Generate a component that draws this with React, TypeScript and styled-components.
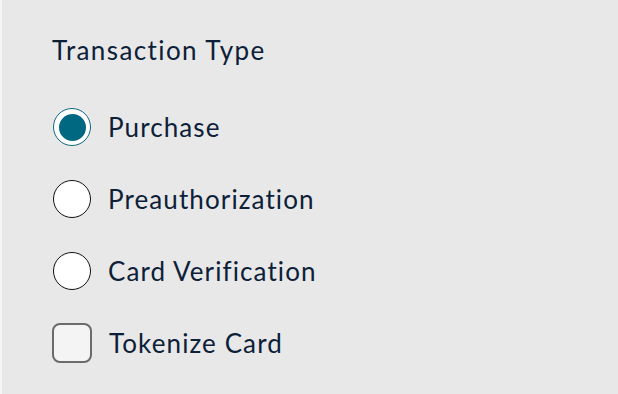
import React, { FC } from 'react'
import styled, { createGlobalStyle, css } from 'styled-components'

type Option = { label: string; kind: 'radio' | 'checkbox'; checked?: boolean }

const options: Option[] = [
  { label: 'Purchase', kind: 'radio', checked: true },
  { label: 'Preauthorization', kind: 'radio' },
  { label: 'Card Verification', kind: 'radio' },
  { label: 'Tokenize Card', kind: 'checkbox' },
]

const App: FC = () => {
  return (
    <>
      <GlobalStyle />
      <Page>
        <Edge />
        <Panel>
          <Heading>Transaction Type</Heading>
          <List>
            {options.map((o) => (
              <Row key={o.label}>
                {o.kind === 'radio' ? <Radio $checked={!!o.checked} /> : <Checkbox />}
                <Label>{o.label}</Label>
              </Row>
            ))}
          </List>
        </Panel>
      </Page>
    </>
  )
}

export default App

const GlobalStyle = createGlobalStyle`
  html, body {
    margin: 0;
    padding: 0;
    background: #e8e8e8;
  }
`

const Page = styled.div`
  display: flex;
  width: 618px;
  height: 394px;
  overflow: hidden;
  font-family: Lato, 'Noto Sans', sans-serif;
  color: #0c2038;
`

const Edge = styled.div`
  width: 2px;
  background: #f6f6f6;
`

const Panel = styled.section`
  flex: 1;
  background: #e8e8e8;
  padding: 34px 0 0 50px;
`

const Heading = styled.h2`
  margin: 0;
  font-size: 26px;
  font-weight: 400;
  line-height: 32px;
  letter-spacing: 1.4px;
`

const List = styled.div`
  display: flex;
  flex-direction: column;
  margin-top: 25px;
`

const Row = styled.label`
  display: flex;
  align-items: center;
  gap: 17px;
  height: 72px;
`

const Radio = styled.span<{ $checked: boolean }>`
  box-sizing: border-box;
  width: 38px;
  height: 38px;
  margin-left: 1px;
  border-radius: 50%;
  background: #fff;
  border: 1.2px solid #111;
  display: flex;
  align-items: center;
  justify-content: center;
  ${(p) =>
    p.$checked &&
    css`
      border: 1.5px solid #0b6a7e;
      &::after {
        content: '';
        width: 27px;
        height: 27px;
        border-radius: 50%;
        background: #006880;
      }
    `}
`

const Checkbox = styled.span`
  box-sizing: border-box;
  width: 40px;
  height: 40px;
  border: 2.5px solid #6b6b6b;
  border-radius: 8px;
  background: #f4f4f4;
`

const Label = styled.span`
  font-size: 26px;
  line-height: 32px;
  letter-spacing: 1.1px;
`
